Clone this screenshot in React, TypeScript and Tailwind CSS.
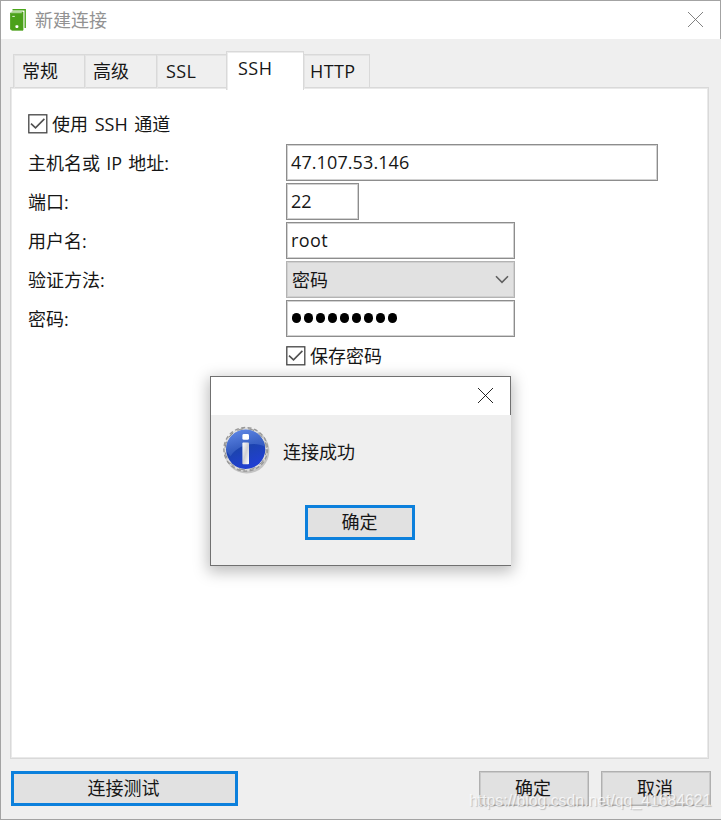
import React from "react";

const field =
  "flex h-[37px] items-center border border-[#8d8d8d] bg-white pl-1 pb-px shadow-[inset_0_0_0_1px_#d2d2d2]";

const tab = "h-[34px] border border-b-0 border-[#d9d9d9] pt-[4px] shadow-[inset_1px_1px_0_#e4e4e4]";

function Check({ label, className = "" }: { label: string; className?: string }) {
  return (
    <div className={`flex items-center gap-1 whitespace-pre ${className}`}>
      <svg width="20" height="20" viewBox="0 0 20 20" fill="none" className="shrink-0">
        <rect x="0.8" y="0.8" width="18" height="18" fill="#fff" stroke="#444" strokeWidth="1.3" />
        <path d="M3 9.6 7.5 13.9 16.4 4.9" stroke="#505050" strokeWidth="1.6" />
      </svg>
      <span>{label}</span>
    </div>
  );
}

function Row({ label, children }: { label: string; children: React.ReactNode }) {
  return (
    <div className="flex h-[39px] items-start">
      <div className="flex h-[37px] w-[258px] shrink-0 items-center whitespace-pre [word-spacing:1.5px]">{label}</div>
      {children}
    </div>
  );
}

function Close({ color }: { color: string }) {
  return (
    <svg width="16" height="16" viewBox="0 0 16 16" stroke={color} strokeWidth="0.85" fill="none">
      <path d="M0 0 15 15M15 0 0 15" />
    </svg>
  );
}

function InfoIcon() {
  return (
    <svg width="48" height="50" viewBox="0 0 48 50" className="-mt-[2px] shrink-0">
      <defs>
        <linearGradient id="ball" x1="0" y1="0" x2="0.4" y2="1">
          <stop offset="0" stopColor="#4a78dc" />
          <stop offset="0.5" stopColor="#1c44ac" />
          <stop offset="1" stopColor="#203fd0" />
        </linearGradient>
        <linearGradient id="gloss" x1="0" y1="0" x2="0.3" y2="1">
          <stop offset="0" stopColor="#6d94ee" />
          <stop offset="1" stopColor="#3158bd" />
        </linearGradient>
        <linearGradient id="stem" x1="0" y1="0" x2="1" y2="1">
          <stop offset="0" stopColor="#fff" />
          <stop offset="0.5" stopColor="#d0d0d4" />
          <stop offset="1" stopColor="#fff" />
        </linearGradient>
      </defs>
      <ellipse cx="23.8" cy="25" rx="22.6" ry="22.5" fill="#c4c4c4" />
      <circle cx="22.7" cy="23.3" r="21.8" fill="#dedede" stroke="#989898" strokeWidth="1.4" strokeDasharray="4 2.5" />
      <circle cx="22.7" cy="23.3" r="20.6" fill="none" stroke="#8c8c8c" strokeWidth="1" strokeDasharray="6 5" />
      <circle cx="22.7" cy="23.3" r="19.6" fill="url(#ball)" />
      <path d="M3.4 25.1A19.4 19.4 0 0 1 42 20.8C31 15.3 16 17.8 7.4 30.3Z" fill="url(#gloss)" opacity="0.75" />
      <rect x="19.4" y="8" width="6.6" height="5.8" rx="1.4" fill="#fff" />
      <rect x="19.4" y="16.6" width="6.6" height="21.6" rx="0.8" fill="url(#stem)" />
    </svg>
  );
}

export default function App() {
  return (
    <div className="relative flex h-[820px] w-[721px] flex-col overflow-hidden border-b border-l border-t border-[#a3a3a3] bg-[#efefef] font-['Open_Sans','Noto_Sans_CJK_SC',sans-serif] text-[18px] leading-6 text-[#161616]">
      <header className="flex h-[38px] shrink-0 items-center border-r border-[#a3a3a3] bg-white pb-px pl-[9px] pr-[16px]">
        <svg width="17" height="22" viewBox="0 0 17 22">
          <path d="M2.5 0.8H15.2V19" fill="none" stroke="#4ba61b" strokeWidth="1.4" />
          <path d="M0.5 4 2 3H13V21.2H2L0.5 20.2Z" fill="#4ba11b" stroke="#4ba11b" strokeWidth="0.8" />
          <path d="M1 3.7H11.8" stroke="#e0f2d8" strokeWidth="0.8" />
          <path d="M2.3 7.4H4.8" stroke="#e0f2d8" strokeWidth="1" />
          <rect x="5.4" y="16.3" width="3" height="2.6" rx="0.8" fill="#fff" />
        </svg>
        <span className="grow pl-2 text-[#929292]">新建连接</span>
        <Close color="#6c6c6c" />
      </header>

      <nav className="z-10 ml-[12px] mt-[12px] flex h-[37px] shrink-0 items-end">
        <div className={`${tab} w-[72px] pl-[8px]`}>常规</div>
        <div className={`${tab} -ml-px w-[73px] pl-[8px]`}>高级</div>
        <div className={`${tab} -ml-px w-[72px] pl-[9px] tracking-[0.4px]`}>SSL</div>
        <div className="-mb-[2px] -ml-[2px] h-[39px] w-[78px] border border-b-0 border-[#d9d9d9] bg-white pl-[11px] pt-[4px] tracking-[0.5px] shadow-[inset_1px_1px_0_#ececec]">SSH</div>
        <div className={`${tab} -ml-px w-[67px] pl-[6px] tracking-[0.4px]`}>HTTP</div>
      </nav>

      <main className="-mt-px ml-[9px] h-[672px] w-[699px] shrink-0 border border-[#d9d9d9] bg-white pl-[17px] pt-[26px] shadow-[inset_0_0_0_1px_#e9e9e9]">
        <Check label="使用 SSH 通道" className="mb-[10px] h-[20px] [word-spacing:2px]" />
        <Row label="主机名或 IP 地址:">
          <div className={`${field} w-[372px] tracking-[0.1px]`}>47.107.53.146</div>
        </Row>
        <Row label="端口:">
          <div className={`${field} w-[73px]`}>22</div>
        </Row>
        <Row label="用户名:">
          <div className={`${field} w-[229px] tracking-[0.4px]`}>root</div>
        </Row>
        <Row label="验证方法:">
          <div className="flex h-[37px] w-[229px] items-center justify-between border border-[#b3b3b3] bg-[#e1e1e1] pl-[5px] pr-[5px] shadow-[inset_0_0_0_1px_#cfcfcf]">
            <span>密码</span>
            <svg width="14" height="9" viewBox="0 0 14 9" fill="none" stroke="#606060" strokeWidth="1.6">
              <path d="M1 1.3 7 7.3 13 1.3" />
            </svg>
          </div>
        </Row>
        <Row label="密码:">
          <div className={`${field} w-[229px] gap-[3px] pl-[5px]`}>
            {Array.from({ length: 9 }, (_, i) => (
              <span key={i} className="h-[10px] w-[9px] rounded-full bg-black" />
            ))}
          </div>
        </Row>
        <Check label="保存密码" className="ml-[258px] mt-[7px] h-[20px]" />
      </main>

      <footer className="ml-[10px] mt-[12px] flex h-[35px] w-[700px] shrink-0">
        <button className="w-[227px] border-[3px] border-[#0c80dc] bg-[#e1e1e1] pb-px pr-[2px]">连接测试</button>
        <button className="ml-auto w-[110px] border border-[#b0b0b0] bg-[#e1e1e1] pb-px pr-[2px] shadow-[inset_0_0_0_1px_#cacaca]">确定</button>
        <button className="ml-[12px] w-[110px] border border-[#b0b0b0] bg-[#e1e1e1] pb-px pr-[2px] shadow-[inset_0_0_0_1px_#cacaca]">取消</button>
      </footer>

      <section className="absolute left-[209px] top-[375px] z-20 flex h-[190px] w-[301px] flex-col border-b border-l border-t border-[#707070] bg-[#efefef] shadow-[0_4px_14px_2px_rgba(0,0,0,0.26)]">
        <div className="flex h-[38px] shrink-0 items-center justify-end border-r border-[#707070] bg-white pr-[16px]">
          <Close color="#000" />
        </div>
        <div className="flex h-[50px] items-center gap-[12px] pl-[12px] mt-[12px]">
          <InfoIcon />
          <span>连接成功</span>
        </div>
        <button className="ml-[94px] mt-[28px] h-[35px] w-[110px] border-[3px] border-[#0c80dc] bg-[#e1e1e1] pb-px pr-px">确定</button>
      </section>

      <div className="absolute bottom-[6px] left-[468px] z-30 whitespace-nowrap font-['Liberation_Sans',sans-serif] text-[15.8px] text-white/75 [text-shadow:1px_1px_1px_rgba(0,0,0,0.2)]">
        https://blog.csdn.net/qq_41684621
      </div>
    </div>
  );
}
